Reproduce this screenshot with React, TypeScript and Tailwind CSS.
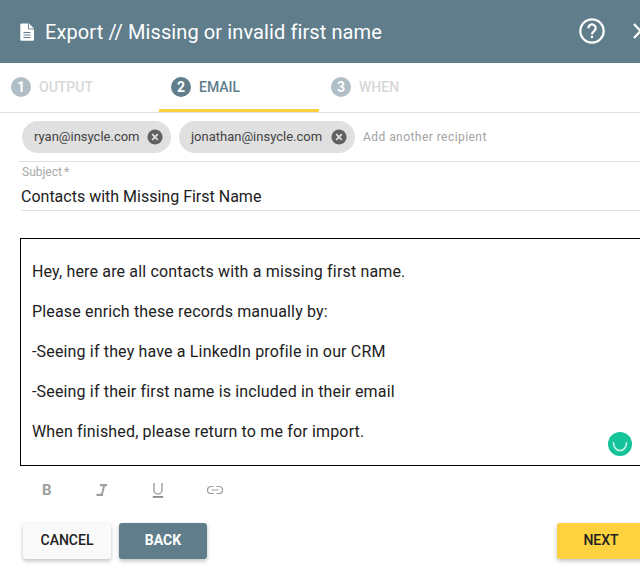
import React from "react";

function Step({ n, label, active, width, pad }: { n: number; label: string; active?: boolean; width: string; pad: string }) {
  return (
    <div className={`${width} ${pad} h-full flex items-center gap-[8px] pt-[2px] border-b-[3px] ${active ? "border-[#fdd23e]" : "border-transparent"}`}>
      <span className={`w-[20px] h-[20px] rounded-full flex items-center justify-center text-white text-[14px] font-bold ${active ? "bg-[#607d8b]" : "bg-[#b0bec5]"}`}>{n}</span>
      <span className={`text-[14px] font-medium ${active ? "text-[#607d8b]" : "text-[#d8d8d8]"}`}>{label}</span>
    </div>
  );
}

function Chip({ text, width }: { text: string; width: string }) {
  return (
    <div className={`${width} h-[32px] rounded-full bg-[#e0e0e0] flex items-center justify-between pl-[12px] pr-[8px]`}>
      <span className="text-[13px] text-[#424242]">{text}</span>
      <svg width="16" height="16" viewBox="0 0 16 16">
        <circle cx="8" cy="8" r="7.6" fill="#616161" />
        <path d="M5.2 5.2l5.6 5.6M10.8 5.2l-5.6 5.6" stroke="#e0e0e0" strokeWidth="1.7" />
      </svg>
    </div>
  );
}

export default function App() {
  return (
    <div className="w-[640px] h-[575px] overflow-hidden bg-white font-['Roboto',sans-serif]">
      <div className="w-[700px]">
        <header className="h-[63px] bg-[#607d8b] flex items-center text-white pl-[20px]">
          <svg width="14" height="18" viewBox="0 0 14 18" className="shrink-0">
            <path d="M1.500 0.500H9L14 5.500V16.500a1.200 1.200 0 0 1-1.200 1.200H1.500A1.200 1.200 0 0 1 .3 16.500V1.700A1.200 1.200 0 0 1 1.500.5Z" fill="#fff" />
            <path d="M8.500 .5V6H14" fill="none" stroke="#607d8b" strokeWidth="0.9" />
            <path d="M3.500 9.500h7M3.500 12h7M3.500 14.500h7" stroke="#607d8b" strokeWidth="1.100" />
          </svg>
          <h1 className="ml-[11px] w-[533px] text-[20px] font-normal tracking-[0.1px]">Export // Missing or invalid first name</h1>
          <svg width="28" height="28" viewBox="0 0 28 28" className="shrink-0 -mt-[2px]">
            <circle cx="14" cy="14" r="11.700" fill="none" stroke="#fff" strokeWidth="2.200" />
            <path d="M10.300 11.200a3.700 3.700 0 1 1 5.800 3c-1.400 1-2.100 1.600-2.100 3.200" fill="none" stroke="#fff" strokeWidth="2.200" />
            <rect x="12.800" y="18.800" width="2.300" height="2.300" fill="#fff" />
          </svg>
          <svg width="16" height="16" viewBox="0 0 16 16" className="shrink-0 ml-[26px] -mt-[2px]">
            <path d="M2 1l13 14M15 1L2 15" stroke="#fff" strokeWidth="2.200" />
          </svg>
        </header>

        <nav className="h-[50px] flex border-b border-[#e0e0e0]">
          <Step n={1} label="OUTPUT" width="w-[159px]" pad="pl-[11px]" />
          <Step n={2} label="EMAIL" active width="w-[160px]" pad="pl-[12px]" />
          <div className="w-[1px]" />
          <Step n={3} label="WHEN" width="w-[160px]" pad="pl-[11px]" />
        </nav>

        <div className="ml-[19px] h-[49px] pl-[3px] pt-[8px] border-b border-[#e0e0e0] flex items-start gap-[8px]">
          <Chip text="ryan@insycle.com" width="w-[149px]" />
          <Chip text="jonathan@insycle.com" width="w-[176px]" />
          <span className="h-[32px] leading-[32px] text-[12px] text-[#a3a3a3] tracking-[0.45px]">Add another recipient</span>
        </div>

        <div className="ml-[21px] h-[49px] border-b border-[#e0e0e0]">
          <div className="pl-[1px] h-[20px] leading-[20px] text-[12px] text-[#a8a8a8]">Subject<span className="ml-[2px]">*</span></div>
          <div className="h-[28px] leading-[30px] text-[16px] text-[#212121]">Contacts with Missing First Name</div>
        </div>

        <div className="mt-[27px] ml-[20px] h-[228px] border border-black pl-[11px] pt-[23px] text-[16px] tracking-[0.16px] text-[#212121] relative">
          <p className="h-[40px] leading-[20px]">Hey, here are all contacts with a missing first name.</p>
          <p className="h-[40px] leading-[20px]">Please enrich these records manually by:</p>
          <p className="h-[40px] leading-[20px]">-Seeing if they have a LinkedIn profile in our CRM</p>
          <p className="h-[40px] leading-[20px]">-Seeing if their first name is included in their email</p>
          <p className="h-[40px] leading-[20px]">When finished, please return to me for import.</p>
          <svg width="24" height="24" viewBox="0 0 24 24" className="absolute left-[587px] top-[193px]">
            <circle cx="12" cy="12" r="12" fill="#15c39a" />
            <path d="M5.500 11a6.500 7.500 0 0 0 13 0" fill="none" stroke="#b9f0e0" strokeWidth="1.800" strokeLinecap="round" />
          </svg>
        </div>

        <div className="h-[48px] ml-[20px] flex items-center text-[#9e9e9e]">
          <span className="w-[55px] pl-[22px] text-[15px] font-bold leading-none">B</span>
          <svg width="14" height="14" viewBox="0 0 14 14" className="ml-[20px]">
            <path d="M5 1h7v2.200H10L8 11H6L8 3.200H5zM1.500 10.800h6.500V13H1.500z" fill="#9e9e9e" />
          </svg>
          <svg width="14" height="16" viewBox="0 0 14 16" className="ml-[42px]">
            <path d="M3 1v7a4 4 0 0 0 8 0V1" fill="none" stroke="#9e9e9e" strokeWidth="1.400" />
            <rect x="1.800" y="14" width="10.400" height="1.800" fill="#8a8a8a" />
          </svg>
          <svg width="16" height="10" viewBox="0 0 16 10" className="ml-[42px]">
            <path d="M6.500 1.500H4a3.500 3.500 0 0 0 0 7h2.500M9.500 1.500H12a3.500 3.500 0 0 1 0 7H9.500M4.500 5h7" fill="none" stroke="#9e9e9e" strokeWidth="1.200" />
          </svg>
        </div>

        <div className="ml-[23px] mt-[9px] flex items-start">
          <button className="w-[88px] h-[36px] pb-[1px] rounded-[3px] bg-[#fafafa] text-[14px] font-medium text-[#212121] shadow-[0_2px_4px_rgba(0,0,0,0.25)]">CANCEL</button>
          <button className="ml-[8px] w-[88px] h-[36px] pb-[1px] rounded-[3px] bg-[#607d8b] text-[14px] font-bold text-white shadow-[0_2px_4px_rgba(0,0,0,0.25)]">BACK</button>
          <button className="ml-[350px] w-[88px] h-[36px] pb-[1px] rounded-[3px] bg-[#fdd23e] text-[14px] font-medium text-[#212121] shadow-[0_2px_4px_rgba(0,0,0,0.25)]">NEXT</button>
        </div>
      </div>
    </div>
  );
}
